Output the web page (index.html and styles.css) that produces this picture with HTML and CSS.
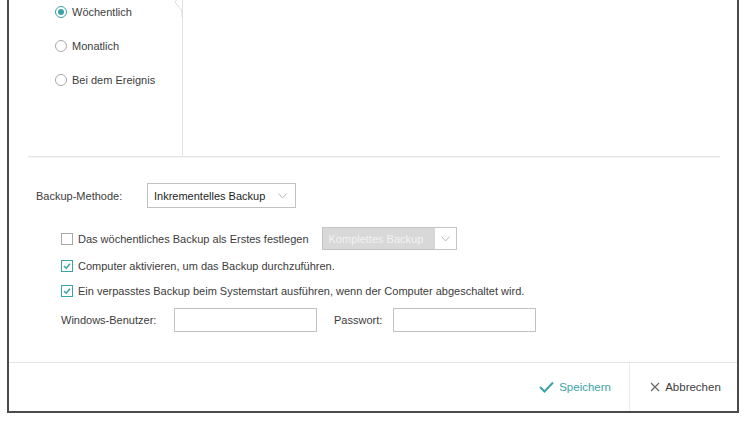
FILE: index.html
```html
<!DOCTYPE html>
<html lang="de">
  <head>
    <meta charset="UTF-8" />
    <title>Zeitplan-Einstellungen</title>
    <link rel="stylesheet" href="styles.css">
  </head>
  <body>
    <div class="dialog">
      <div class="top">
        <div class="freq">
          <label class="radio-row"><span class="radio checked"></span>Wöchentlich</label>
          <label class="radio-row"><span class="radio"></span>Monatlich</label>
          <label class="radio-row"><span class="radio"></span>Bei dem Ereignis</label>
          <svg class="notch" width="10" height="24" viewBox="0 0 10 24">
            <path d="M8 0 L1 9 L8 18 L8 24" fill="#fff" stroke="#dcdcdc" stroke-width="1" />
          </svg>
        </div>
        <div class="detail"></div>
      </div>
      <div class="sep"></div>

      <div class="settings">
        <div class="method-row">
          <span class="method-label">Backup-Methode:</span>
          <div class="select">
            <span>Inkrementelles Backup</span>
            <svg width="9" height="6" viewBox="0 0 9 6"><path d="M0.5 0.5 L4.5 5 L8.5 0.5" fill="none" stroke="#bbb" stroke-width="1" /></svg>
          </div>
        </div>

        <div class="check-row first">
          <span class="box"></span>
          <span>Das wöchentliches Backup als Erstes festlegen</span>
          <div class="select disabled">
            <span>Komplettes Backup</span>
            <span class="arrow"><svg width="9" height="6" viewBox="0 0 9 6"><path d="M0.5 0.5 L4.5 5 L8.5 0.5" fill="none" stroke="#bbb" stroke-width="1" /></svg></span>
          </div>
        </div>
        <div class="check-row second">
          <span class="box on"><svg width="10" height="10" viewBox="0 0 10 10"><path d="M2 5 L4.2 7.2 L8 2.8" fill="none" stroke="#3aa3a6" stroke-width="1.5" /></svg></span>
          <span>Computer aktivieren, um das Backup durchzuführen.</span>
        </div>
        <div class="check-row third">
          <span class="box on"><svg width="10" height="10" viewBox="0 0 10 10"><path d="M2 5 L4.2 7.2 L8 2.8" fill="none" stroke="#3aa3a6" stroke-width="1.5" /></svg></span>
          <span>Ein verpasstes Backup beim Systemstart ausführen, wenn der Computer abgeschaltet wird.</span>
        </div>

        <div class="user-row">
          <span class="user-label">Windows-Benutzer:</span>
          <input class="field" type="text" />
          <span class="pass-label">Passwort:</span>
          <input class="field" type="password" />
        </div>
      </div>

      <div class="footer">
        <button class="btn save">
          <svg width="15" height="12" viewBox="0 0 15 12"><path d="M1 6 L5.5 10.5 L14 1.5" fill="none" stroke="#3aa3a6" stroke-width="2" /></svg>
          Speichern
        </button>
        <button class="btn cancel">
          <svg width="10" height="10" viewBox="0 0 10 10"><path d="M1 1 L9 9 M9 1 L1 9" fill="none" stroke="#666" stroke-width="1.2" /></svg>
          Abbrechen
        </button>
      </div>
    </div>
  </body>
</html>
```

FILE: styles.css
```css
body {
  margin: 0;
  background: #fff;
  font-family: "Liberation Sans", Arial, sans-serif;
  font-size: 11px;
  color: #3c3c3c;
}

.dialog {
  box-sizing: border-box;
  width: 732px;
  height: 413px;
  margin-left: 7px;
  border: 2px solid #4a4a4a;
  border-top: none;
  background: #fff;
  display: flex;
  flex-direction: column;
}

.top {
  display: flex;
  height: 156px;
}

.freq {
  position: relative;
  box-sizing: border-box;
  width: 174px;
  border-right: 1px solid #e2e2e2;
  padding: 5px 0 0 46px;
  display: flex;
  flex-direction: column;
  gap: 21px;
}

.notch {
  position: absolute;
  right: -2px;
  top: -7px;
}

.detail {
  flex: 1;
}

.radio-row {
  display: flex;
  align-items: center;
  gap: 5px;
  height: 13px;
}

.radio {
  box-sizing: border-box;
  width: 12px;
  height: 12px;
  border: 1px solid #a9a9a9;
  border-radius: 50%;
  background: #fff;
  display: flex;
  align-items: center;
  justify-content: center;
}

.radio.checked {
  border-color: #3aa3a6;
}

.radio.checked::after {
  content: "";
  width: 6px;
  height: 6px;
  border-radius: 50%;
  background: #3aa3a6;
}

.sep {
  height: 1px;
  margin: 0 17px 0 19px;
  background: #e6e6e6;
  box-shadow: 0 1px 1px #f3f3f3;
}

.settings {
  height: 205px;
  box-sizing: border-box;
  padding-top: 26px;
}

.method-row {
  display: flex;
  align-items: center;
  padding-left: 27px;
  height: 25px;
}

.method-label {
  width: 111px;
}

.select {
  box-sizing: border-box;
  display: flex;
  align-items: center;
  justify-content: space-between;
  width: 149px;
  height: 25px;
  padding: 0 8px 0 6px;
  border: 1px solid #c2c2c2;
  color: #1e1e1e;
}

.check-row {
  display: flex;
  align-items: center;
  gap: 5px;
  padding-left: 52px;
}

.check-row.first {
  margin-top: 19px;
  height: 23px;
}

.check-row.second {
  margin-top: 4px;
  height: 24px;
}

.check-row.third {
  margin-top: 4px;
  height: 18px;
}

.box {
  box-sizing: border-box;
  width: 12px;
  height: 12px;
  border: 1px solid #a7a7a7;
  background: #fff;
  display: flex;
  align-items: center;
  justify-content: center;
}

.box.on {
  border-color: #3aa3a6;
}

.select.disabled {
  width: 135px;
  height: 23px;
  margin-left: 8px;
  padding: 0 0 0 6px;
  background: #d8d8d8;
  color: #f2f2f2;
  border-color: #c4c4c4;
}

.select.disabled .arrow {
  display: flex;
  align-items: center;
  justify-content: center;
  width: 21px;
  height: 100%;
  background: #fff;
}

.user-row {
  display: flex;
  align-items: center;
  margin-top: 8px;
  padding-left: 52px;
  height: 24px;
}

.user-label {
  width: 113px;
}

.pass-label {
  margin-left: 17px;
  width: 59px;
}

.field {
  box-sizing: border-box;
  width: 143px;
  height: 24px;
  margin: 0;
  border: 1px solid #c2c2c2;
  border-radius: 0;
  background: #fff;
  font: inherit;
}

.footer {
  flex: 1;
  display: flex;
  justify-content: flex-end;
  border-top: 1px solid #e4e4e4;
}

.btn {
  display: flex;
  align-items: center;
  gap: 5px;
  border: none;
  background: none;
  padding: 0;
  font: inherit;
  font-size: 11.5px;
  cursor: pointer;
}

.save {
  color: #3aa3a6;
  padding-right: 18px;
}

.cancel {
  width: 108px;
  justify-content: center;
  border-left: 1px solid #ececec;
  color: #3c3c3c;
  padding-left: 4px;
}
```
